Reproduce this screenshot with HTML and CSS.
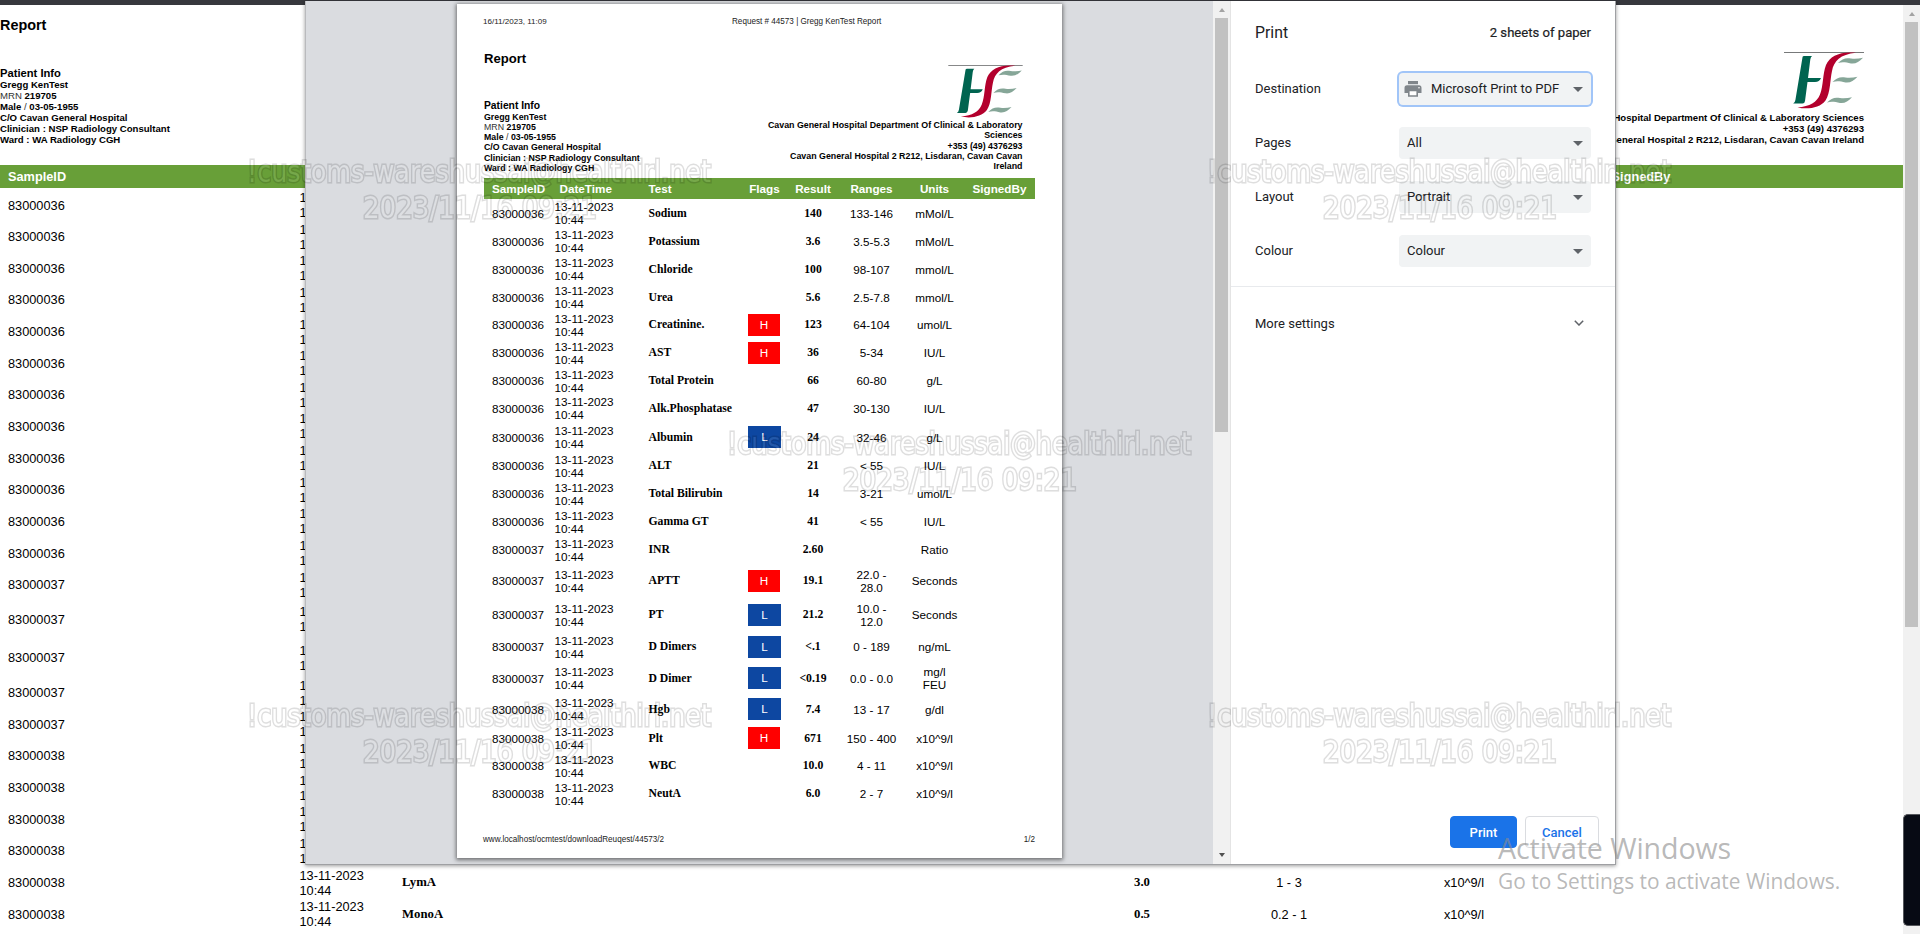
FILE: index.html
```html
<!DOCTYPE html>
<html lang="en">
<head>
<meta charset="utf-8">
<title>Request # 44573 | Gregg KenTest Report</title>
<link rel="stylesheet" href="styles.css">
</head>
<body>
<svg class="defs" width="0" height="0" aria-hidden="true">
  <symbol id="logo" viewBox="0 0 80 57">
    <path d="M0 .5H80" stroke="#77797a" stroke-width="1" fill="none"/>
    <path d="M18.6 4.8Q19 4 20 4H28Q26.6 5 26.3 7.5L24 26H37Q35.5 30 31 30H23.5L21 49Q20.6 51.6 18.5 51.6H9.2Q11 50.5 11.4 48Z" fill="#006450"/>
    <path d="M72 .8C56 -.8 46 4 42 13C38.500 22 39.500 34 36 42.500C33 50 26 54.500 13.500 55.500C24 57.600 36 56 41.500 48.500C46.500 41 46 28 48 19C50 9 56 2.500 72 .8Z" fill="#b3002d"/>
    <g fill="#86a698">
      <path id="leaf" d="M54 11C58 6.500 62 5.500 67 6.500C71 7.300 75 6.500 79 5.800C75 10 72 12 67 11.500C62 10.500 59 9.800 54 11Z"/>
      <use href="#leaf" x="-5.500" y="19"/>
      <use href="#leaf" x="-11" y="39.500"/>
    </g>
  </symbol>
</svg>

<div class="browser">
  <main class="report report--screen">
    <h1 class="report__title">Report</h1>
    <div class="report__info">
      <div class="patient">
        <h2>Patient Info</h2>
        <p>Gregg KenTest</p>
        <p><span>MRN</span> 219705</p>
        <p>Male <span>/</span> 03-05-1955</p>
        <p>C/O Cavan General Hospital</p>
        <p>Clinician : NSP Radiology Consultant</p>
        <p>Ward : WA Radiology CGH</p>
      </div>
      <div class="lab">
        <svg class="lab__logo"><use href="#logo"/></svg>
        <p>Cavan General Hospital Department Of Clinical &amp; Laboratory Sciences</p>
        <p>+353 (49) 4376293</p>
        <p>Cavan General Hospital 2 R212, Lisdaran, Cavan Cavan Ireland</p>
      </div>
    </div>
    <div class="results" id="screen-results"></div>
  </main>
  <div class="scrollbar scrollbar--page"><i class="up"></i><b></b></div>
</div>

<section class="dialog">
  <div class="preview">
    <article class="report report--print">
      <header class="sheet-line"><span>16/11/2023, 11:09</span><span class="sheet-line__title">Request # 44573 | Gregg KenTest Report</span></header>
      <h1 class="report__title">Report</h1>
      <div class="report__info">
        <div class="patient">
          <h2>Patient Info</h2>
          <p>Gregg KenTest</p>
          <p><span>MRN</span> 219705</p>
          <p>Male <span>/</span> 03-05-1955</p>
          <p>C/O Cavan General Hospital</p>
          <p>Clinician : NSP Radiology Consultant</p>
          <p>Ward : WA Radiology CGH</p>
        </div>
        <div class="lab">
          <svg class="lab__logo"><use href="#logo"/></svg>
          <p>Cavan General Hospital Department Of Clinical &amp; Laboratory<br>Sciences</p>
          <p>+353 (49) 4376293</p>
          <p>Cavan General Hospital 2 R212, Lisdaran, Cavan Cavan<br>Ireland</p>
        </div>
      </div>
      <div class="results" id="print-results"></div>
      <footer class="sheet-line sheet-line--foot"><span>www.localhost/ocmtest/downloadReuqest/44573/2</span><span>1/2</span></footer>
    </article>
  </div>
  <div class="scrollbar scrollbar--preview"><i class="up"></i><b></b><i class="down"></i></div>
  <aside class="settings">
    <header class="settings__head"><h2>Print</h2><span>2 sheets of paper</span></header>
    <div class="field"><label>Destination</label>
      <div class="select select--focus">
        <svg class="printer" viewBox="0 0 18 16"><path d="M4 0H14V3.200H4Z" fill="#80868b"/><path d="M3 4.200H15Q17.500 4.200 17.500 7V12H14V9.500H4V12H.5V7Q.5 4.200 3 4.200Z" fill="#80868b"/><path d="M4.800 9.500H13.200V15H4.800Z" fill="#fff" stroke="#80868b" stroke-width="1.600"/><circle cx="15" cy="6.700" r=".8" fill="#fff"/></svg>
        <span>Microsoft Print to PDF</span></div></div>
    <div class="field"><label>Pages</label><div class="select"><span>All</span></div></div>
    <div class="field"><label>Layout</label><div class="select"><span>Portrait</span></div></div>
    <div class="field"><label>Colour</label><div class="select"><span>Colour</span></div></div>
    <div class="more"><span>More settings</span><svg viewBox="0 0 10 6"><path d="M.8 .8L5 5L9.200 .8" fill="none" stroke="#5f6368" stroke-width="1.500"/></svg></div>
    <footer class="actions"><button class="btn btn--primary">Print</button><button class="btn">Cancel</button></footer>
  </aside>
</section>

<svg class="watermarks" width="1920" height="934" aria-hidden="true">
  <defs>
    <g id="mark">
      <text x="1" y="24" textLength="464" lengthAdjust="spacingAndGlyphs">!customs-wareshussai@healthirl.net</text>
      <text x="117" y="60" textLength="234" lengthAdjust="spacingAndGlyphs">2023/11/16 09:21</text>
    </g>
    <g id="marks">
      <use href="#mark" x="246" y="157.500"/>
      <use href="#mark" x="1206" y="157.500"/>
      <use href="#mark" x="726" y="429.500"/>
      <use href="#mark" x="246" y="701.500"/>
      <use href="#mark" x="1206" y="701.500"/>
    </g>
    <mask id="outline" maskUnits="userSpaceOnUse" x="0" y="0" width="1920" height="934">
      <use href="#marks" class="outline"/>
    </mask>
  </defs>
  <rect width="1920" height="934" fill="#000" fill-opacity=".13" mask="url(#outline)"/>
  <use href="#marks" class="face"/>
</svg>

<div class="activate"><strong>Activate Windows</strong><span>Go to Settings to activate Windows.</span></div>
<div class="side-tab"></div>
<script src="results.js"></script>
</body>
</html>
```
FILE: results.js
```js
// sample, test, flag, result, range, units, printed row height
const rows = [
  ["83000036", "Sodium", "", "140", "133-146", "mMol/L", 27.86],
  ["83000036", "Potassium", "", "3.6", "3.5-5.3", "mMol/L", 27.86],
  ["83000036", "Chloride", "", "100", "98-107", "mmol/L", 27.86],
  ["83000036", "Urea", "", "5.6", "2.5-7.8", "mmol/L", 27.86],
  ["83000036", "Creatinine.", "H", "123", "64-104", "umol/L", 27.86],
  ["83000036", "AST", "H", "36", "5-34", "IU/L", 27.86],
  ["83000036", "Total Protein", "", "66", "60-80", "g/L", 27.86],
  ["83000036", "Alk.Phosphatase", "", "47", "30-130", "IU/L", 27.86],
  ["83000036", "Albumin", "L", "24", "32-46", "g/L", 29.7],
  ["83000036", "ALT", "", "21", "&lt; 55", "IU/L", 27.86],
  ["83000036", "Total Bilirubin", "", "14", "3-21", "umol/L", 27.86],
  ["83000036", "Gamma GT", "", "41", "&lt; 55", "IU/L", 27.86],
  ["83000037", "INR", "", "2.60", "", "Ratio", 27.86],
  ["83000037", "APTT", "H", "19.1", "22.0 -<br>28.0", "Seconds", 34],
  ["83000037", "PT", "L", "21.2", "10.0 -<br>12.0", "Seconds", 34],
  ["83000037", "D Dimers", "L", "&lt;.1", "0 - 189", "ng/mL", 30],
  ["83000037", "D Dimer", "L", "&lt;0.19", "0.0 - 0.0", "mg/l<br>FEU", 33],
  ["83000038", "Hgb", "L", "7.4", "13 - 17", "g/dl", 29.7],
  ["83000038", "Plt", "H", "671", "150 - 400", "x10^9/l", 27.86],
  ["83000038", "WBC", "", "10.0", "4 - 11", "x10^9/l", 27.86],
  ["83000038", "NeutA", "", "6.0", "2 - 7", "x10^9/l", 27.86],
  ["83000038", "LymA", "", "3.0", "1 - 3", "x10^9/l", 0],
  ["83000038", "MonoA", "", "0.5", "0.2 - 1", "x10^9/l", 0],
  ["", "", "", "", "", "", 0]
];
const head = '<div class="row row--head">' +
  ["SampleID", "DateTime", "Test", "Flags", "Result", "Ranges", "Units", "SignedBy"]
    .map(t => `<span>${t}</span>`).join("") + "</div>";

const line = (r, height) => `<div class="row" style="height:${height}px">
  <span>${r[0]}</span><span>13-11-2023<br>10:44</span><span class="serif">${r[1]}</span>
  <span>${r[2] ? `<i class="flag flag--${r[2]}">${r[2]}</i>` : ""}</span>
  <span class="serif">${r[3]}</span><span>${r[4]}</span><span>${r[5]}</span><span></span></div>`;

document.getElementById("screen-results").innerHTML =
  head + rows.map(r => line(r, r[1] === "APTT" || r[1] === "PT" ? 38.2 : 31.65)).join("");
document.getElementById("print-results").innerHTML =
  head + rows.filter(r => r[6]).map(r => line(r, r[6])).join("");
```
FILE: styles.css
```css
* { box-sizing: border-box; }
html, body { margin: 0; height: 934px; overflow: hidden; background: #fff; }
body { position: relative; font-family: "Liberation Sans", Arial, sans-serif; color: #000; }
h1, h2, p { margin: 0; }
.defs { position: absolute; }

.browser { height: 934px; border-top: 5px solid #37383d; display: flex; overflow: hidden; }

/* report, shared by the page and its print preview */
.report__info { display: flex; justify-content: space-between; font-weight: bold; white-space: nowrap; }
.patient span { font-weight: normal; color: #333; }
.lab { text-align: right; display: flex; flex-direction: column; align-items: flex-end; }
.row { display: grid; align-items: center; padding-top: 1px; }
.row > span:nth-child(n+4) { text-align: center; }
.row--head { background: #689f38; color: #fff; font-weight: bold; padding-top: 0; }
.serif { font-family: "Liberation Serif", "Times New Roman", serif; font-weight: bold; }
.flag { display: block; font-style: normal; color: #fff; }
.flag--H { background: #f00; }
.flag--L { background: #0d47a1; }

.report--screen { width: 1903px; flex: none; }
.report--screen .report__title { font-size: 14.4px; line-height: 18px; padding-top: 11px; }
.report--screen .report__info { height: 131px; font-size: 9.6px; line-height: 11px; }
.report--screen .patient { padding-top: 32px; }
.report--screen .patient h2 { font-size: 11.2px; line-height: 13px; margin: 1px 0 -1px; }
.report--screen .lab { padding: 18px 39px 0 0; }
.report--screen .lab__logo { width: 80px; height: 57px; margin-bottom: 3px; flex: none; }
.report--screen .row { grid-template-columns: 299.5px 102.5px 466px 200px 148px 146px 204px 150px; font-size: 12.75px; line-height: 15px; padding-top: 2px; }
.report--screen .row--head { height: 23px; padding-top: 0; }
.report--screen .row--head > span:nth-child(2) { padding-left: 12px; }
.report--screen .row > span:first-child { padding-left: 8px; }

.scrollbar { background: #f1f1f1; width: 17px; flex: none; display: flex; flex-direction: column; align-items: center; }
.scrollbar i { width: 0; height: 0; border: 3.5px solid transparent; margin: 0; }
.scrollbar .up { border-top: 0; border-bottom: 4px solid #a3a3a3; margin: 7px 0 6px; }
.scrollbar .down { border-bottom: 0; border-top: 4px solid #505050; margin: auto 0 7px; }
.scrollbar b { width: 13px; background: #c1c1c1; }
.scrollbar--page b { height: 605px; }

.dialog { position: absolute; left: 305px; top: 1px; width: 1311px; height: 864px; display: flex; background: #fff; border: solid #9fa0a3; border-width: 0 1px 1px 0; border-left: 1px solid #b9babd; box-shadow: 0 1px 4px rgba(0,0,0,.4); }
.preview { width: 907px; flex: none; background: #dadce0; padding: 3px 0 0 151px; }
.scrollbar--preview { width: 18px; border-right: 1px solid #e4e4e4; }
.scrollbar--preview b { height: 414px; }

.report--print { width: 605px; height: 854px; padding: 0 27px; background: #fff; box-shadow: 0 1px 4px 1px rgba(0,0,0,.5); display: flex; flex-direction: column; }
.sheet-line { display: flex; justify-content: space-between; position: relative; font-size: 8.05px; line-height: 10px; margin: 13px 0 0 -1px; color: #222; }
.sheet-line__title { position: absolute; left: 249px; white-space: nowrap; font-size: 8.15px; }
.sheet-line--foot { margin: auto 0 13px -1px; font-size: 8.15px; }
.report--print .report__title { font-size: 13.1px; line-height: 16px; margin-top: 24px; }
.report--print .report__info { height: 111px; flex: none; padding: 0 12.5px 0 0; font-size: 8.800px; line-height: 10.350px; }
.report--print .patient { padding-top: 33px; }
.report--print .patient h2 { font-size: 10.3px; line-height: 11.500px; }
.report--print .patient p { line-height: 10.250px; }
.report--print .lab p { font-size: 8.85px; }
.report--print .lab__logo { width: 75px; height: 53px; flex: none; margin: -2px 0 2px 0; }
.report--print .row { width: 551px; grid-template-columns: 70.500px 94px 99.500px 33px 64px 53px 73px 57px; font-size: 11.7px; line-height: 13px; white-space: nowrap; }
.report--print .row--head { height: 21px; }
.report--print .row > span:first-child { padding-left: 8px; }
.report--print .row--head > span:nth-child(2) { padding-left: 5px; }
.report--print .row--head > span:nth-child(n+4) { margin: 0 -4px; }
.report--print .flag { width: 32px; height: 22px; line-height: 22px; }
.report--print .flag--L { width: 33px; }

.settings { flex: 1; display: flex; flex-direction: column; font: 13px Roboto, sans-serif; color: #202124; }
.settings__head { height: 63px; flex: none; padding: 0 24px; display: flex; align-items: center; justify-content: space-between; }
.settings__head h2 { font-size: 15.800px; font-weight: normal; }
.settings__head span { font-size: 13.1px; -webkit-text-stroke: .2px #202124; }
.field { height: 54px; flex: none; padding: 0 24px; display: flex; align-items: center; justify-content: space-between; margin-top: 0; }
.field label, .field span { margin-top: -1px; }
.settings__head + .field { margin-top: -2px; }
.select { width: 192px; height: 32px; background: #f1f3f4; border-radius: 4px; padding: 0 8px; display: flex; align-items: center; }
.select::after { content: ""; margin-left: auto; border: 5px solid transparent; border-top-color: #5f6368; border-bottom: 0; }
.select--focus { box-shadow: 0 0 0 2px #a1c5f8; padding-left: 5px; }
.printer { width: 18px; height: 16px; margin-right: 9px; }
.more { border-top: 1px solid #e8eaed; margin-top: 8px; padding: 0 31px 0 24px; height: 73px; display: flex; align-items: center; justify-content: space-between; }
.more svg { width: 10px; height: 6px; }
.actions { margin-top: auto; padding: 0 16px 16px; display: flex; justify-content: flex-end; gap: 8px; }
.btn { font: 500 13px Roboto, sans-serif; width: 74px; height: 32px; border: 1px solid #dadce0; border-radius: 4px; background: #fff; color: #1a73e8; padding: 0; }
.btn--primary { width: 67px; background: #1a73e8; border-color: #1a73e8; color: #fff; }

/* tiled outline lettering: the mask keeps only the rim of each glyph */
.watermarks { position: absolute; left: 0; top: 0; font: 30px "DejaVu Sans Condensed", "DejaVu Sans", sans-serif; }
.outline { fill: #000; stroke: #fff; stroke-width: 2.8px; paint-order: stroke; }
.face { fill: rgba(255,255,255,.1); }

.activate { position: absolute; left: 1498px; top: 829px; display: flex; flex-direction: column; font-family: "Open Sans", "Noto Sans", sans-serif; color: rgba(140,140,140,.62); white-space: nowrap; }
.activate strong { font-size: 28.600px; line-height: 37px; font-weight: normal; letter-spacing: -.1px; }
.activate span { font-size: 20.900px; line-height: 31px; }
.side-tab { position: absolute; right: 0; top: 814px; width: 17px; height: 112px; background: #070a14; border: 1px solid #55575c; border-right: 0; border-radius: 5px 0 0 5px; }
```
